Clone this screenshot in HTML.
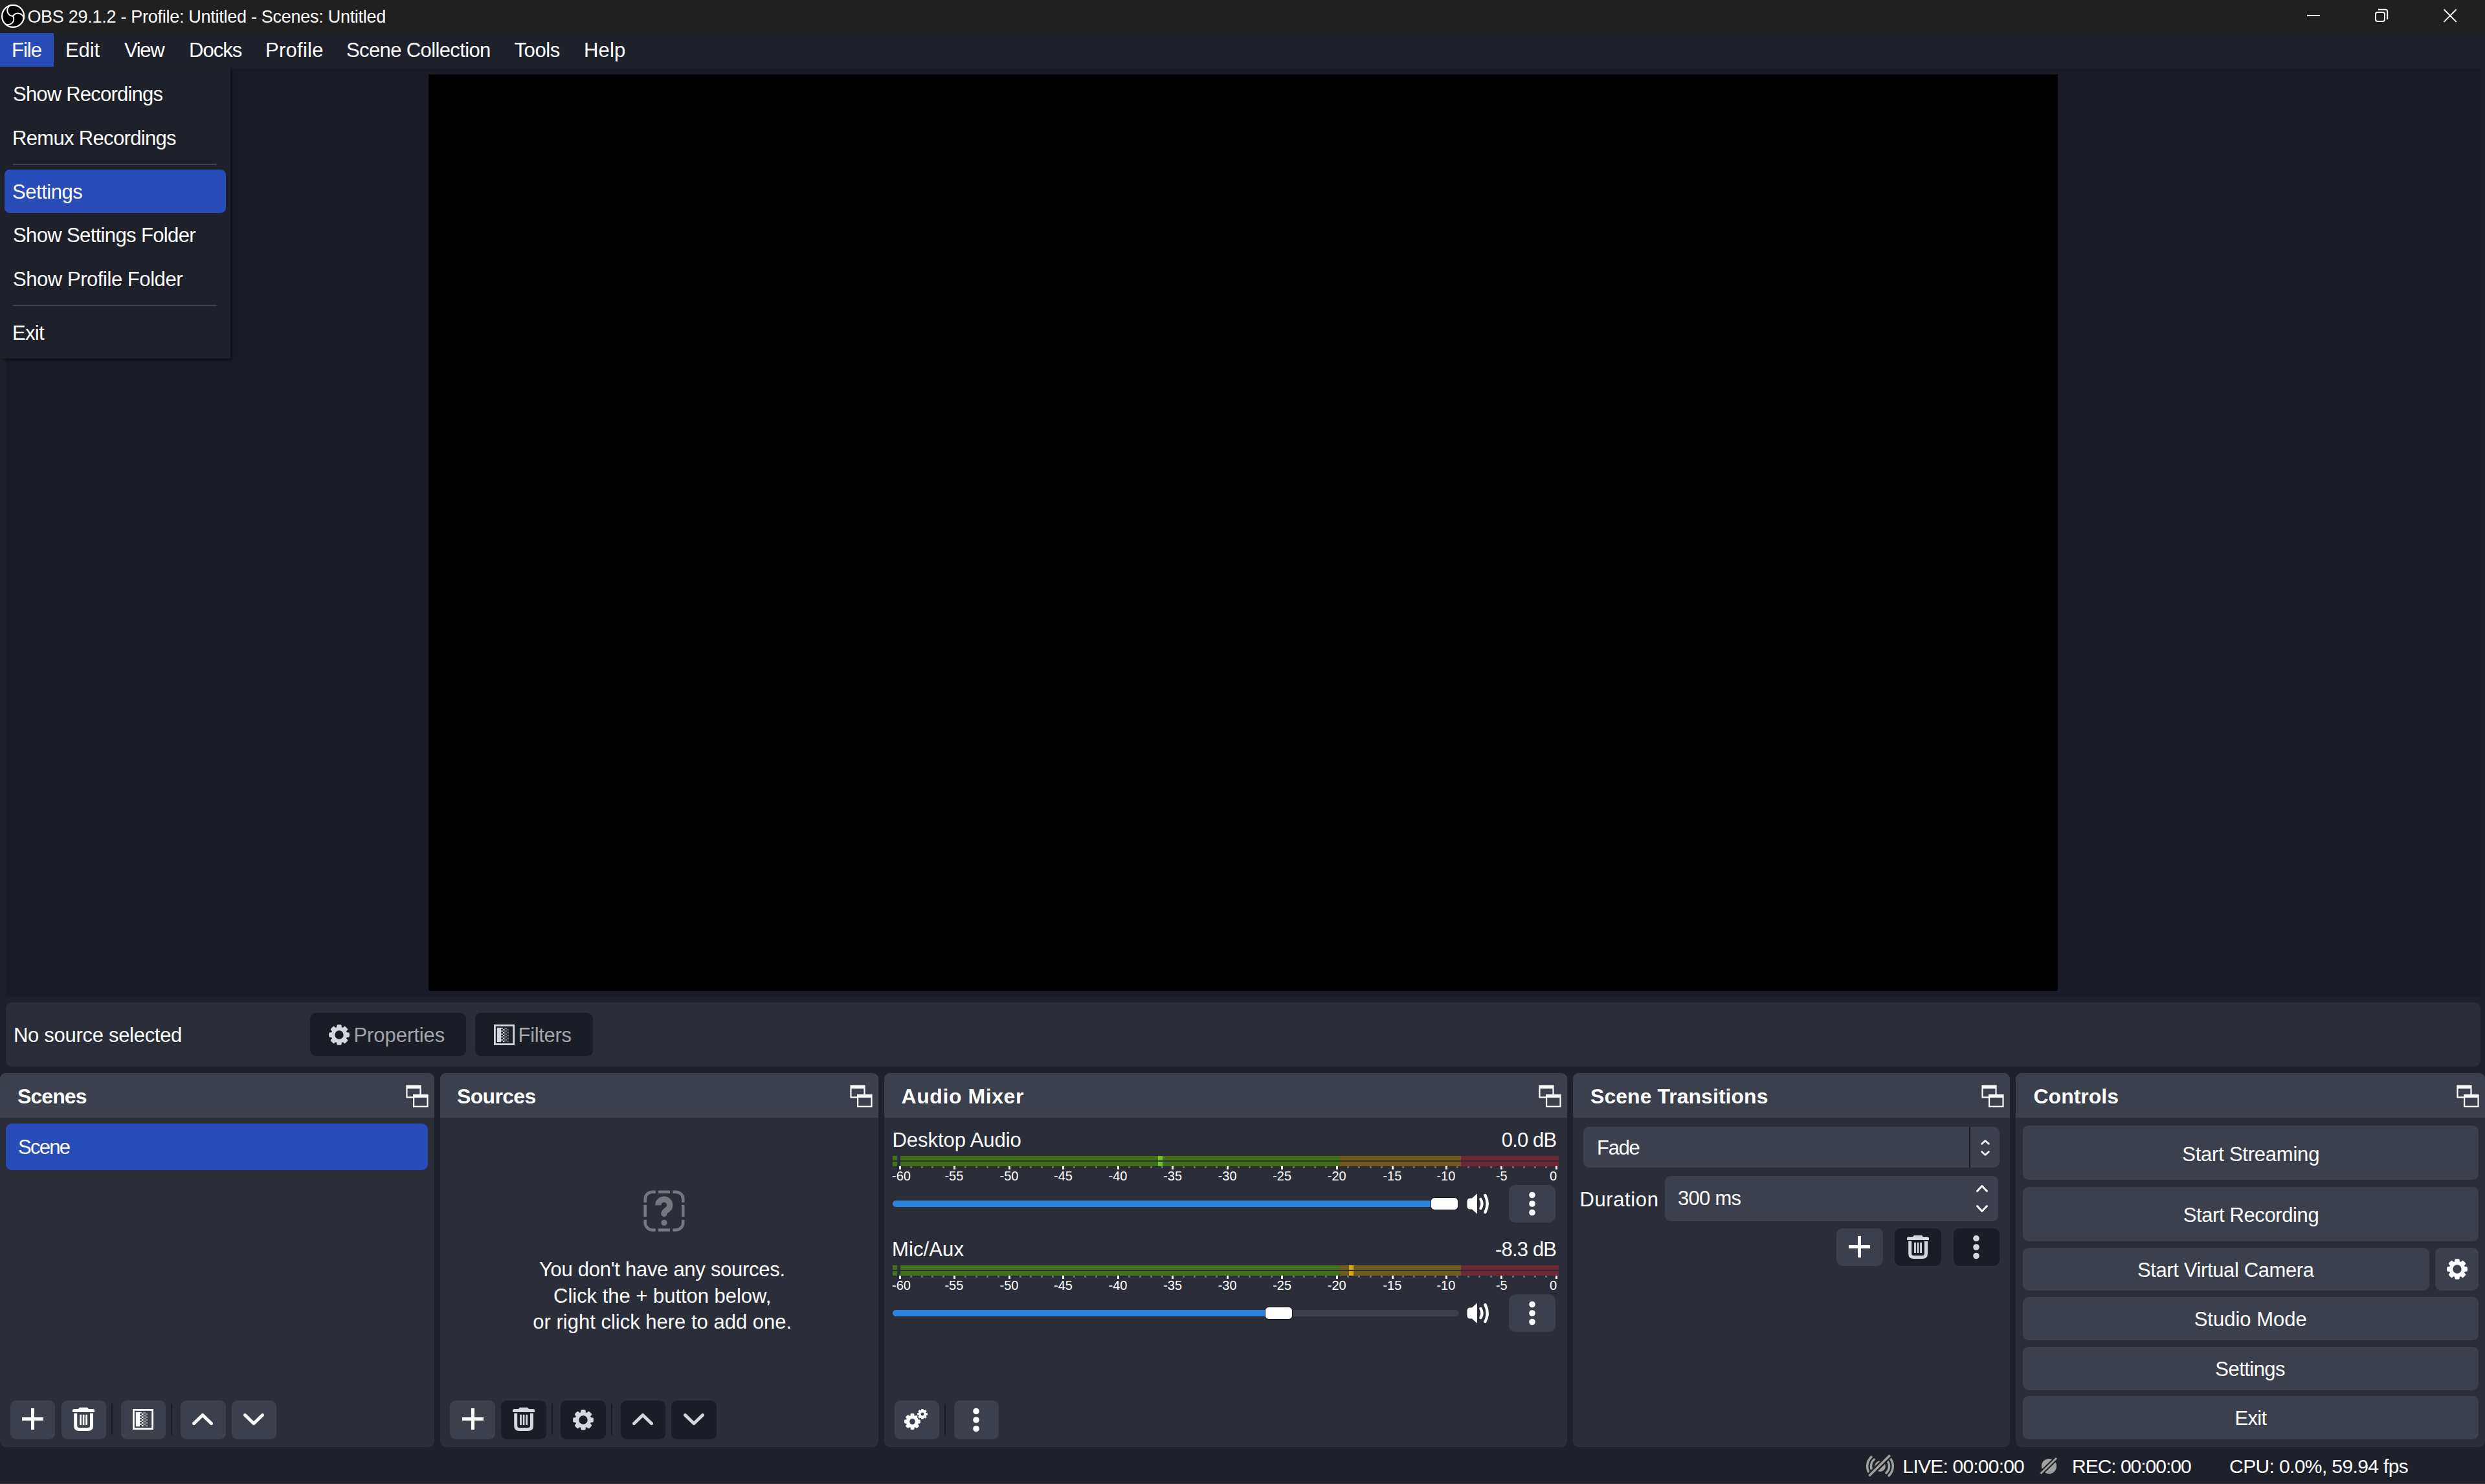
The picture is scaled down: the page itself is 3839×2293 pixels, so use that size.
<!DOCTYPE html>
<html><head><meta charset="utf-8"><style>
html,body{margin:0;padding:0;width:3839px;height:2293px;overflow:hidden;background:#1f212a;}
body>div,body>svg{position:absolute;}
.t{font-family:"Liberation Sans",sans-serif;white-space:pre;}
</style></head><body>
<div style="left:0px;top:0px;width:3839px;height:2293px;background:#1f212a;"></div>
<div style="left:0px;top:0px;width:3839px;height:51px;background:#202020;"></div>
<svg style="left:1px;top:6px;" width="38" height="38" viewBox="0 0 38 38"><circle cx="19.1" cy="18.9" r="17" fill="#000" stroke="#fff" stroke-width="2.2"/><path d="M19.1,18.9 A8.8,8.8 0 0 1 15.38,2.12 M19.1,18.9 A8.8,8.8 0 0 1 35.49,24.07 M19.1,18.9 A8.8,8.8 0 0 1 6.43,30.51" fill="none" stroke="#fff" stroke-width="2.1"/></svg>
<div id="title" class="t" style="top:13px;font-size:27px;line-height:27px;color:#ffffff;letter-spacing:-0.279px;left:42.4px;">OBS 29.1.2 - Profile: Untitled - Scenes: Untitled</div>
<div style="left:3564px;top:23px;width:20px;height:2px;background:#fff;"></div>
<svg style="left:3666px;top:11px;" width="28" height="28" viewBox="0 0 28 28"><rect x="4" y="8" width="14" height="14" rx="3" fill="none" stroke="#fff" stroke-width="2"/><path d="M8,3.8 H18.8 Q22.2,3.8 22.2,7.2 V19" fill="none" stroke="#fff" stroke-width="2"/></svg>
<svg style="left:3772px;top:11px;" width="26" height="26" viewBox="0 0 26 26"><path d="M3.5,3.5 L22.8,22.8 M22.8,3.5 L3.5,22.8" stroke="#fff" stroke-width="1.9"/></svg>
<div style="left:0px;top:51px;width:83px;height:52px;background:#284cb8;"></div>
<div id="m_file" class="t" style="top:62px;font-size:31px;line-height:31px;color:#ffffff;letter-spacing:-1.000px;left:18px;">File</div>
<div id="m_edit" class="t" style="top:62px;font-size:31px;line-height:31px;color:#ffffff;letter-spacing:-0.134px;left:101.0px;">Edit</div>
<div id="m_view" class="t" style="top:62px;font-size:31px;line-height:31px;color:#ffffff;letter-spacing:-1.333px;left:192px;">View</div>
<div id="m_docks" class="t" style="top:62px;font-size:31px;line-height:31px;color:#ffffff;letter-spacing:-1.000px;left:292px;">Docks</div>
<div id="m_profile" class="t" style="top:62px;font-size:31px;line-height:31px;color:#ffffff;letter-spacing:0.266px;left:410.0px;">Profile</div>
<div id="m_sc" class="t" style="top:62px;font-size:31px;line-height:31px;color:#ffffff;letter-spacing:-0.626px;left:535.0px;">Scene Collection</div>
<div id="m_tools" class="t" style="top:62px;font-size:31px;line-height:31px;color:#ffffff;letter-spacing:-0.400px;left:794.5px;">Tools</div>
<div id="m_help" class="t" style="top:62px;font-size:31px;line-height:31px;color:#ffffff;letter-spacing:0.133px;left:902.0px;">Help</div>
<div style="left:9px;top:105px;width:3823px;height:1435px;background:#191b26;"></div>
<div style="left:662px;top:115px;width:2517px;height:1416px;background:#000;"></div>
<div style="left:9px;top:1549px;width:3823px;height:99px;background:#2b2e38;border-radius:9px;"></div>
<div id="nosrc" class="t" style="top:1584px;font-size:31px;line-height:31px;color:#ffffff;letter-spacing:-0.294px;left:21px;">No source selected</div>
<div style="left:479px;top:1565px;width:241px;height:67px;background:#1b1d26;border-radius:9px;"></div>
<svg style="left:507px;top:1582px;overflow:visible" width="34" height="34" viewBox="0 0 34 34"><path fill-rule="evenodd" fill="#d6d6de" stroke="#d6d6de" stroke-width="3.52" stroke-linejoin="round" d="M26.90,12.90 L27.53,14.98 L31.10,15.01 L31.10,18.99 L27.53,19.02 L26.90,21.10 L25.87,23.02 L28.38,25.56 L25.56,28.38 L23.02,25.87 L21.10,26.90 L19.02,27.53 L18.99,31.10 L15.01,31.10 L14.98,27.53 L12.90,26.90 L10.98,25.87 L8.44,28.38 L5.62,25.56 L8.13,23.02 L7.10,21.10 L6.47,19.02 L2.90,18.99 L2.90,15.01 L6.47,14.98 L7.10,12.90 L8.13,10.98 L5.62,8.44 L8.44,5.62 L10.98,8.13 L12.90,7.10 L14.98,6.47 L15.01,2.90 L18.99,2.90 L19.02,6.47 L21.10,7.10 L23.02,8.13 L25.56,5.62 L28.38,8.44 L25.87,10.98Z M25.48,17.00 A8.48,8.48 0 1 0 8.52,17.00 A8.48,8.48 0 1 0 25.48,17.00Z"/></svg>
<div id="props" class="t" style="top:1584px;font-size:31px;line-height:31px;color:#a4a4aa;letter-spacing:-0.066px;left:546.5px;">Properties</div>
<div style="left:734px;top:1565px;width:182px;height:67px;background:#1b1d26;border-radius:9px;"></div>
<svg style="left:763px;top:1583px;" width="32" height="32" viewBox="0 0 32 32"><rect x="1.4" y="1.4" width="29.2" height="29.2" fill="none" stroke="#d6d6de" stroke-width="2.8"/><rect x="4.8" y="4.9" width="6.5" height="22.2" fill="#d6d6de"/><rect x="11.3" y="4.90" width="2.4" height="2.22" fill="#d6d6de"/><rect x="16.3" y="4.90" width="4" height="2.22" fill="#d6d6de" opacity="0.45"/><rect x="11.3" y="7.12" width="2.4" height="2.22" fill="#17181e" opacity="0.7"/><rect x="13.9" y="7.12" width="2.3" height="2.22" fill="#d6d6de"/><rect x="16.3" y="7.12" width="1" height="2.22" fill="#d6d6de" opacity="0.45"/><rect x="18.2" y="7.12" width="2" height="2.22" fill="#d6d6de" opacity="0.15"/><rect x="20.6" y="7.12" width="2.4" height="2.22" fill="#d6d6de" opacity="0.45"/><rect x="11.3" y="9.34" width="2.4" height="2.22" fill="#d6d6de"/><rect x="16.3" y="9.34" width="4" height="2.22" fill="#d6d6de" opacity="0.45"/><rect x="11.3" y="11.56" width="2.4" height="2.22" fill="#17181e" opacity="0.7"/><rect x="13.9" y="11.56" width="2.3" height="2.22" fill="#d6d6de"/><rect x="16.3" y="11.56" width="1" height="2.22" fill="#d6d6de" opacity="0.45"/><rect x="18.2" y="11.56" width="2" height="2.22" fill="#d6d6de" opacity="0.15"/><rect x="20.6" y="11.56" width="2.4" height="2.22" fill="#d6d6de" opacity="0.45"/><rect x="11.3" y="13.78" width="2.4" height="2.22" fill="#d6d6de"/><rect x="16.3" y="13.78" width="4" height="2.22" fill="#d6d6de" opacity="0.45"/><rect x="11.3" y="16.00" width="2.4" height="2.22" fill="#17181e" opacity="0.7"/><rect x="13.9" y="16.00" width="2.3" height="2.22" fill="#d6d6de"/><rect x="16.3" y="16.00" width="1" height="2.22" fill="#d6d6de" opacity="0.45"/><rect x="18.2" y="16.00" width="2" height="2.22" fill="#d6d6de" opacity="0.15"/><rect x="20.6" y="16.00" width="2.4" height="2.22" fill="#d6d6de" opacity="0.45"/><rect x="11.3" y="18.22" width="2.4" height="2.22" fill="#d6d6de"/><rect x="16.3" y="18.22" width="4" height="2.22" fill="#d6d6de" opacity="0.45"/><rect x="11.3" y="20.44" width="2.4" height="2.22" fill="#17181e" opacity="0.7"/><rect x="13.9" y="20.44" width="2.3" height="2.22" fill="#d6d6de"/><rect x="16.3" y="20.44" width="1" height="2.22" fill="#d6d6de" opacity="0.45"/><rect x="18.2" y="20.44" width="2" height="2.22" fill="#d6d6de" opacity="0.15"/><rect x="20.6" y="20.44" width="2.4" height="2.22" fill="#d6d6de" opacity="0.45"/><rect x="11.3" y="22.66" width="2.4" height="2.22" fill="#d6d6de"/><rect x="16.3" y="22.66" width="4" height="2.22" fill="#d6d6de" opacity="0.45"/><rect x="11.3" y="24.88" width="2.4" height="2.22" fill="#17181e" opacity="0.7"/><rect x="13.9" y="24.88" width="2.3" height="2.22" fill="#d6d6de"/><rect x="16.3" y="24.88" width="1" height="2.22" fill="#d6d6de" opacity="0.45"/><rect x="18.2" y="24.88" width="2" height="2.22" fill="#d6d6de" opacity="0.15"/><rect x="20.6" y="24.88" width="2.4" height="2.22" fill="#d6d6de" opacity="0.45"/></svg>
<div id="filters" class="t" style="top:1584px;font-size:31px;line-height:31px;color:#a4a4aa;letter-spacing:-0.300px;left:800.5px;">Filters</div>
<div style="left:0px;top:1658px;width:671px;height:578px;background:#2b2e38;border-radius:9px;"></div>
<div style="left:0px;top:1658px;width:671px;height:69px;background:#3c404d;border-radius:9px 9px 0 0;"></div>
<div id="dk0" class="t" style="top:1678px;font-size:32px;line-height:32px;color:#ffffff;font-weight:bold;letter-spacing:-0.920px;left:27.0px;">Scenes</div>
<svg style="left:627px;top:1676px;" width="36" height="36" viewBox="0 0 36 36"><rect x="1.5" y="2" width="21" height="17.5" fill="none" stroke="#fff" stroke-width="2.2"/><rect x="1" y="1" width="22" height="5" fill="#fff"/><rect x="11.5" y="16" width="22" height="18" fill="#3c404d"/><rect x="12.1" y="16.1" width="21.4" height="17.7" fill="none" stroke="#fff" stroke-width="2.2"/><rect x="11" y="15" width="23" height="5" fill="#fff"/></svg>
<div style="left:680px;top:1658px;width:677px;height:578px;background:#2b2e38;border-radius:9px;"></div>
<div style="left:680px;top:1658px;width:677px;height:69px;background:#3c404d;border-radius:9px 9px 0 0;"></div>
<div id="dk1" class="t" style="top:1678px;font-size:32px;line-height:32px;color:#ffffff;font-weight:bold;letter-spacing:-0.667px;left:706px;">Sources</div>
<svg style="left:1313px;top:1676px;" width="36" height="36" viewBox="0 0 36 36"><rect x="1.5" y="2" width="21" height="17.5" fill="none" stroke="#fff" stroke-width="2.2"/><rect x="1" y="1" width="22" height="5" fill="#fff"/><rect x="11.5" y="16" width="22" height="18" fill="#3c404d"/><rect x="12.1" y="16.1" width="21.4" height="17.7" fill="none" stroke="#fff" stroke-width="2.2"/><rect x="11" y="15" width="23" height="5" fill="#fff"/></svg>
<div style="left:1366px;top:1658px;width:1055px;height:578px;background:#2b2e38;border-radius:9px;"></div>
<div style="left:1366px;top:1658px;width:1055px;height:69px;background:#3c404d;border-radius:9px 9px 0 0;"></div>
<div id="dk2" class="t" style="top:1678px;font-size:32px;line-height:32px;color:#ffffff;font-weight:bold;letter-spacing:0.580px;left:1392.5px;">Audio Mixer</div>
<svg style="left:2377px;top:1676px;" width="36" height="36" viewBox="0 0 36 36"><rect x="1.5" y="2" width="21" height="17.5" fill="none" stroke="#fff" stroke-width="2.2"/><rect x="1" y="1" width="22" height="5" fill="#fff"/><rect x="11.5" y="16" width="22" height="18" fill="#3c404d"/><rect x="12.1" y="16.1" width="21.4" height="17.7" fill="none" stroke="#fff" stroke-width="2.2"/><rect x="11" y="15" width="23" height="5" fill="#fff"/></svg>
<div style="left:2430px;top:1658px;width:675px;height:578px;background:#2b2e38;border-radius:9px;"></div>
<div style="left:2430px;top:1658px;width:675px;height:69px;background:#3c404d;border-radius:9px 9px 0 0;"></div>
<div id="dk3" class="t" style="top:1678px;font-size:32px;line-height:32px;color:#ffffff;font-weight:bold;letter-spacing:0.037px;left:2457.0px;">Scene Transitions</div>
<svg style="left:3061px;top:1676px;" width="36" height="36" viewBox="0 0 36 36"><rect x="1.5" y="2" width="21" height="17.5" fill="none" stroke="#fff" stroke-width="2.2"/><rect x="1" y="1" width="22" height="5" fill="#fff"/><rect x="11.5" y="16" width="22" height="18" fill="#3c404d"/><rect x="12.1" y="16.1" width="21.4" height="17.7" fill="none" stroke="#fff" stroke-width="2.2"/><rect x="11" y="15" width="23" height="5" fill="#fff"/></svg>
<div style="left:3114px;top:1658px;width:725px;height:578px;background:#2b2e38;border-radius:9px;"></div>
<div style="left:3114px;top:1658px;width:725px;height:69px;background:#3c404d;border-radius:9px 9px 0 0;"></div>
<div id="dk4" class="t" style="top:1678px;font-size:32px;line-height:32px;color:#ffffff;font-weight:bold;left:3141.5px;">Controls</div>
<svg style="left:3795px;top:1676px;" width="36" height="36" viewBox="0 0 36 36"><rect x="1.5" y="2" width="21" height="17.5" fill="none" stroke="#fff" stroke-width="2.2"/><rect x="1" y="1" width="22" height="5" fill="#fff"/><rect x="11.5" y="16" width="22" height="18" fill="#3c404d"/><rect x="12.1" y="16.1" width="21.4" height="17.7" fill="none" stroke="#fff" stroke-width="2.2"/><rect x="11" y="15" width="23" height="5" fill="#fff"/></svg>
<div style="left:9px;top:1736px;width:652px;height:72px;background:#284cb8;border-radius:9px;"></div>
<div id="scene" class="t" style="top:1757px;font-size:31px;line-height:31px;color:#ffffff;letter-spacing:-1.750px;left:28px;">Scene</div>
<div style="left:16px;top:2164px;width:69px;height:60px;background:#3c404d;border-radius:9px;"></div>
<svg style="left:34px;top:2176px;" width="33" height="33" viewBox="0 0 33 33"><path d="M16.5,0 V33 M0,16.5 H33" stroke="#fff" stroke-width="5"/></svg>
<div style="left:95px;top:2164px;width:69px;height:60px;background:#3c404d;border-radius:9px;"></div>
<svg style="left:111px;top:2174px;" width="36" height="38" viewBox="0 0 36 38"><path d="M1,5.5 Q1,3 3.5,3 H10 L12,0.7 H24 L26,3 H32.5 Q35,3 35,5.5 V8 H1 Z" fill="#fff"/><path d="M5.7,9.8 V29 Q5.7,34.5 11.2,34.5 H24.8 Q30.5,34.5 30.5,29 V9.8" fill="none" stroke="#fff" stroke-width="5"/><rect x="12.1" y="11.8" width="2.8" height="16.2" fill="#fff"/><rect x="16.8" y="11.8" width="2.6" height="16.2" fill="#fff"/><rect x="21.2" y="11.8" width="2.8" height="16.2" fill="#fff"/></svg>
<div style="left:172px;top:2169px;width:2px;height:48px;background:#1b1d24;"></div>
<div style="left:187px;top:2164px;width:69px;height:60px;background:#3c404d;border-radius:9px;"></div>
<svg style="left:205px;top:2177px;" width="32" height="32" viewBox="0 0 32 32"><rect x="1.4" y="1.4" width="29.2" height="29.2" fill="none" stroke="#fff" stroke-width="2.8"/><rect x="4.8" y="4.9" width="6.5" height="22.2" fill="#fff"/><rect x="11.3" y="4.90" width="2.4" height="2.22" fill="#fff"/><rect x="16.3" y="4.90" width="4" height="2.22" fill="#fff" opacity="0.45"/><rect x="11.3" y="7.12" width="2.4" height="2.22" fill="#17181e" opacity="0.7"/><rect x="13.9" y="7.12" width="2.3" height="2.22" fill="#fff"/><rect x="16.3" y="7.12" width="1" height="2.22" fill="#fff" opacity="0.45"/><rect x="18.2" y="7.12" width="2" height="2.22" fill="#fff" opacity="0.15"/><rect x="20.6" y="7.12" width="2.4" height="2.22" fill="#fff" opacity="0.45"/><rect x="11.3" y="9.34" width="2.4" height="2.22" fill="#fff"/><rect x="16.3" y="9.34" width="4" height="2.22" fill="#fff" opacity="0.45"/><rect x="11.3" y="11.56" width="2.4" height="2.22" fill="#17181e" opacity="0.7"/><rect x="13.9" y="11.56" width="2.3" height="2.22" fill="#fff"/><rect x="16.3" y="11.56" width="1" height="2.22" fill="#fff" opacity="0.45"/><rect x="18.2" y="11.56" width="2" height="2.22" fill="#fff" opacity="0.15"/><rect x="20.6" y="11.56" width="2.4" height="2.22" fill="#fff" opacity="0.45"/><rect x="11.3" y="13.78" width="2.4" height="2.22" fill="#fff"/><rect x="16.3" y="13.78" width="4" height="2.22" fill="#fff" opacity="0.45"/><rect x="11.3" y="16.00" width="2.4" height="2.22" fill="#17181e" opacity="0.7"/><rect x="13.9" y="16.00" width="2.3" height="2.22" fill="#fff"/><rect x="16.3" y="16.00" width="1" height="2.22" fill="#fff" opacity="0.45"/><rect x="18.2" y="16.00" width="2" height="2.22" fill="#fff" opacity="0.15"/><rect x="20.6" y="16.00" width="2.4" height="2.22" fill="#fff" opacity="0.45"/><rect x="11.3" y="18.22" width="2.4" height="2.22" fill="#fff"/><rect x="16.3" y="18.22" width="4" height="2.22" fill="#fff" opacity="0.45"/><rect x="11.3" y="20.44" width="2.4" height="2.22" fill="#17181e" opacity="0.7"/><rect x="13.9" y="20.44" width="2.3" height="2.22" fill="#fff"/><rect x="16.3" y="20.44" width="1" height="2.22" fill="#fff" opacity="0.45"/><rect x="18.2" y="20.44" width="2" height="2.22" fill="#fff" opacity="0.15"/><rect x="20.6" y="20.44" width="2.4" height="2.22" fill="#fff" opacity="0.45"/><rect x="11.3" y="22.66" width="2.4" height="2.22" fill="#fff"/><rect x="16.3" y="22.66" width="4" height="2.22" fill="#fff" opacity="0.45"/><rect x="11.3" y="24.88" width="2.4" height="2.22" fill="#17181e" opacity="0.7"/><rect x="13.9" y="24.88" width="2.3" height="2.22" fill="#fff"/><rect x="16.3" y="24.88" width="1" height="2.22" fill="#fff" opacity="0.45"/><rect x="18.2" y="24.88" width="2" height="2.22" fill="#fff" opacity="0.15"/><rect x="20.6" y="24.88" width="2.4" height="2.22" fill="#fff" opacity="0.45"/></svg>
<div style="left:264px;top:2169px;width:2px;height:48px;background:#1b1d24;"></div>
<div style="left:279px;top:2164px;width:70px;height:60px;background:#3c404d;border-radius:9px;"></div>
<svg style="left:297px;top:2184px;" width="32" height="18" viewBox="0 0 32 18"><path d="M2.5,15.5 L16.0,2.5 L29.5,15.5" fill="none" stroke="#fff" stroke-width="5" stroke-linecap="round" stroke-linejoin="round"/></svg>
<div style="left:358px;top:2164px;width:69px;height:60px;background:#3c404d;border-radius:9px;"></div>
<svg style="left:376px;top:2184px;" width="32" height="18" viewBox="0 0 32 18"><path d="M2.5,2.5 L16.0,15.5 L29.5,2.5" fill="none" stroke="#fff" stroke-width="5" stroke-linecap="round" stroke-linejoin="round"/></svg>
<svg style="left:994px;top:1839px;" width="64" height="64" viewBox="0 0 64 64"><path d="M2.7,19 V13.9 A11.2,11.2 0 0 1 13.9,2.7 H18.8 M22.8,2.7 H41 M45.3,2.7 H50.1 A11.2,11.2 0 0 1 61.3,13.9 V19 M61.3,22.8 V41.1 M61.3,45.7 V50.3 A11.2,11.2 0 0 1 50.1,61.5 H45.3 M41,61.5 H22.8 M18.8,61.5 H13.9 A11.2,11.2 0 0 1 2.7,50.3 V45.7 M2.7,41.1 V22.8" fill="none" stroke="#76777e" stroke-width="4.6"/><path d="M22.8,23.2 A9,9 0 0 1 40.8,23.2 Q40.8,27.8 36.3,30.6 Q32,33.4 32,36.5" fill="none" stroke="#76777e" stroke-width="9.2"/><circle cx="32" cy="36.5" r="4.6" fill="#76777e"/><circle cx="32" cy="50.3" r="4.6" fill="#76777e"/></svg>
<div id="src1" class="t" style="top:1946px;font-size:31px;line-height:31px;color:#ffffff;letter-spacing:-0.277px;left:22.900000000000045px;width:2000px;text-align:center;">You don't have any sources.</div>
<div id="src2" class="t" style="top:1987.3px;font-size:31px;line-height:31px;color:#ffffff;letter-spacing:-0.025px;left:23.2px;width:2000px;text-align:center;">Click the + button below,</div>
<div id="src3" class="t" style="top:2027px;font-size:31px;line-height:31px;color:#ffffff;left:23.200000000000045px;width:2000px;text-align:center;">or right click here to add one.</div>
<div style="left:695px;top:2164px;width:70px;height:60px;background:#3c404d;border-radius:9px;"></div>
<svg style="left:714px;top:2176px;" width="33" height="33" viewBox="0 0 33 33"><path d="M16.5,0 V33 M0,16.5 H33" stroke="#fff" stroke-width="5"/></svg>
<div style="left:774px;top:2164px;width:70px;height:60px;background:#1b1d26;border-radius:9px;"></div>
<svg style="left:791px;top:2174px;" width="36" height="38" viewBox="0 0 36 38"><path d="M1,5.5 Q1,3 3.5,3 H10 L12,0.7 H24 L26,3 H32.5 Q35,3 35,5.5 V8 H1 Z" fill="#d6d6de"/><path d="M5.7,9.8 V29 Q5.7,34.5 11.2,34.5 H24.8 Q30.5,34.5 30.5,29 V9.8" fill="none" stroke="#d6d6de" stroke-width="5"/><rect x="12.1" y="11.8" width="2.8" height="16.2" fill="#d6d6de"/><rect x="16.8" y="11.8" width="2.6" height="16.2" fill="#d6d6de"/><rect x="21.2" y="11.8" width="2.8" height="16.2" fill="#d6d6de"/></svg>
<div style="left:852px;top:2169px;width:2px;height:48px;background:#1b1d24;"></div>
<div style="left:866px;top:2164px;width:70px;height:60px;background:#1b1d26;border-radius:9px;"></div>
<svg style="left:884px;top:2177px;overflow:visible" width="34" height="34" viewBox="0 0 34 34"><path fill-rule="evenodd" fill="#d6d6de" stroke="#d6d6de" stroke-width="3.52" stroke-linejoin="round" d="M26.90,12.90 L27.53,14.98 L31.10,15.01 L31.10,18.99 L27.53,19.02 L26.90,21.10 L25.87,23.02 L28.38,25.56 L25.56,28.38 L23.02,25.87 L21.10,26.90 L19.02,27.53 L18.99,31.10 L15.01,31.10 L14.98,27.53 L12.90,26.90 L10.98,25.87 L8.44,28.38 L5.62,25.56 L8.13,23.02 L7.10,21.10 L6.47,19.02 L2.90,18.99 L2.90,15.01 L6.47,14.98 L7.10,12.90 L8.13,10.98 L5.62,8.44 L8.44,5.62 L10.98,8.13 L12.90,7.10 L14.98,6.47 L15.01,2.90 L18.99,2.90 L19.02,6.47 L21.10,7.10 L23.02,8.13 L25.56,5.62 L28.38,8.44 L25.87,10.98Z M25.48,17.00 A8.48,8.48 0 1 0 8.52,17.00 A8.48,8.48 0 1 0 25.48,17.00Z"/></svg>
<div style="left:944px;top:2169px;width:2px;height:48px;background:#1b1d24;"></div>
<div style="left:959px;top:2164px;width:69px;height:60px;background:#1b1d26;border-radius:9px;"></div>
<svg style="left:977px;top:2184px;" width="32" height="18" viewBox="0 0 32 18"><path d="M2.5,15.5 L16.0,2.5 L29.5,15.5" fill="none" stroke="#d6d6de" stroke-width="5" stroke-linecap="round" stroke-linejoin="round"/></svg>
<div style="left:1037px;top:2164px;width:70px;height:60px;background:#1b1d26;border-radius:9px;"></div>
<svg style="left:1056px;top:2184px;" width="32" height="18" viewBox="0 0 32 18"><path d="M2.5,2.5 L16.0,15.5 L29.5,2.5" fill="none" stroke="#d6d6de" stroke-width="5" stroke-linecap="round" stroke-linejoin="round"/></svg>
<div id="ch_0" class="t" style="top:1746px;font-size:31px;line-height:31px;color:#ffffff;letter-spacing:-0.049px;left:1378.5px;">Desktop Audio</div>
<div id="chv_0" class="t" style="top:1745.6px;font-size:31px;line-height:31px;color:#ffffff;letter-spacing:-0.880px;left:404.2px;width:2000px;text-align:right;">0.0 dB</div>
<div style="left:1379px;top:1786px;width:7px;height:7px;background:#427018;"></div>
<div style="left:1391px;top:1786px;width:679px;height:7px;background:#427018;"></div>
<div style="left:2070px;top:1786px;width:187px;height:7px;background:#705b1c;"></div>
<div style="left:2257px;top:1786px;width:151px;height:7px;background:#702735;"></div>
<div style="left:1789px;top:1786px;width:7px;height:7px;background:#73bd31;"></div>
<div style="left:1379px;top:1795px;width:7px;height:7px;background:#427018;"></div>
<div style="left:1391px;top:1795px;width:679px;height:7px;background:#427018;"></div>
<div style="left:2070px;top:1795px;width:187px;height:7px;background:#705b1c;"></div>
<div style="left:2257px;top:1795px;width:151px;height:7px;background:#702735;"></div>
<div style="left:1789px;top:1795px;width:7px;height:7px;background:#73bd31;"></div>
<div style="left:1389px;top:1802px;width:3px;height:5px;background:#fff;"></div>
<div style="left:1406px;top:1802px;width:3px;height:3px;background:#6b6b6b;"></div>
<div style="left:1423px;top:1802px;width:3px;height:3px;background:#6b6b6b;"></div>
<div style="left:1439px;top:1802px;width:3px;height:3px;background:#6b6b6b;"></div>
<div style="left:1456px;top:1802px;width:3px;height:3px;background:#6b6b6b;"></div>
<div style="left:1473px;top:1802px;width:3px;height:5px;background:#fff;"></div>
<div style="left:1490px;top:1802px;width:3px;height:3px;background:#6b6b6b;"></div>
<div style="left:1507px;top:1802px;width:3px;height:3px;background:#6b6b6b;"></div>
<div style="left:1524px;top:1802px;width:3px;height:3px;background:#6b6b6b;"></div>
<div style="left:1541px;top:1802px;width:3px;height:3px;background:#6b6b6b;"></div>
<div style="left:1558px;top:1802px;width:3px;height:5px;background:#fff;"></div>
<div style="left:1575px;top:1802px;width:3px;height:3px;background:#6b6b6b;"></div>
<div style="left:1591px;top:1802px;width:3px;height:3px;background:#6b6b6b;"></div>
<div style="left:1608px;top:1802px;width:3px;height:3px;background:#6b6b6b;"></div>
<div style="left:1625px;top:1802px;width:3px;height:3px;background:#6b6b6b;"></div>
<div style="left:1641px;top:1802px;width:3px;height:5px;background:#fff;"></div>
<div style="left:1658px;top:1802px;width:3px;height:3px;background:#6b6b6b;"></div>
<div style="left:1675px;top:1802px;width:3px;height:3px;background:#6b6b6b;"></div>
<div style="left:1692px;top:1802px;width:3px;height:3px;background:#6b6b6b;"></div>
<div style="left:1709px;top:1802px;width:3px;height:3px;background:#6b6b6b;"></div>
<div style="left:1726px;top:1802px;width:3px;height:5px;background:#fff;"></div>
<div style="left:1743px;top:1802px;width:3px;height:3px;background:#6b6b6b;"></div>
<div style="left:1760px;top:1802px;width:3px;height:3px;background:#6b6b6b;"></div>
<div style="left:1777px;top:1802px;width:3px;height:3px;background:#6b6b6b;"></div>
<div style="left:1794px;top:1802px;width:3px;height:3px;background:#6b6b6b;"></div>
<div style="left:1810px;top:1802px;width:3px;height:5px;background:#fff;"></div>
<div style="left:1827px;top:1802px;width:3px;height:3px;background:#6b6b6b;"></div>
<div style="left:1844px;top:1802px;width:3px;height:3px;background:#6b6b6b;"></div>
<div style="left:1861px;top:1802px;width:3px;height:3px;background:#6b6b6b;"></div>
<div style="left:1878px;top:1802px;width:3px;height:3px;background:#6b6b6b;"></div>
<div style="left:1895px;top:1802px;width:3px;height:5px;background:#fff;"></div>
<div style="left:1912px;top:1802px;width:3px;height:3px;background:#6b6b6b;"></div>
<div style="left:1929px;top:1802px;width:3px;height:3px;background:#6b6b6b;"></div>
<div style="left:1946px;top:1802px;width:3px;height:3px;background:#6b6b6b;"></div>
<div style="left:1963px;top:1802px;width:3px;height:3px;background:#6b6b6b;"></div>
<div style="left:1979px;top:1802px;width:3px;height:5px;background:#fff;"></div>
<div style="left:1997px;top:1802px;width:3px;height:3px;background:#6b6b6b;"></div>
<div style="left:2013px;top:1802px;width:3px;height:3px;background:#6b6b6b;"></div>
<div style="left:2030px;top:1802px;width:3px;height:3px;background:#6b6b6b;"></div>
<div style="left:2047px;top:1802px;width:3px;height:3px;background:#6b6b6b;"></div>
<div style="left:2064px;top:1802px;width:3px;height:5px;background:#fff;"></div>
<div style="left:2081px;top:1802px;width:3px;height:3px;background:#6b6b6b;"></div>
<div style="left:2098px;top:1802px;width:3px;height:3px;background:#6b6b6b;"></div>
<div style="left:2116px;top:1802px;width:3px;height:3px;background:#6b6b6b;"></div>
<div style="left:2133px;top:1802px;width:3px;height:3px;background:#6b6b6b;"></div>
<div style="left:2150px;top:1802px;width:3px;height:5px;background:#fff;"></div>
<div style="left:2166px;top:1802px;width:3px;height:3px;background:#6b6b6b;"></div>
<div style="left:2183px;top:1802px;width:3px;height:3px;background:#6b6b6b;"></div>
<div style="left:2200px;top:1802px;width:3px;height:3px;background:#6b6b6b;"></div>
<div style="left:2216px;top:1802px;width:3px;height:3px;background:#6b6b6b;"></div>
<div style="left:2233px;top:1802px;width:3px;height:5px;background:#fff;"></div>
<div style="left:2250px;top:1802px;width:3px;height:3px;background:#6b6b6b;"></div>
<div style="left:2267px;top:1802px;width:3px;height:3px;background:#6b6b6b;"></div>
<div style="left:2284px;top:1802px;width:3px;height:3px;background:#6b6b6b;"></div>
<div style="left:2302px;top:1802px;width:3px;height:3px;background:#6b6b6b;"></div>
<div style="left:2318px;top:1802px;width:3px;height:5px;background:#fff;"></div>
<div style="left:2336px;top:1802px;width:3px;height:3px;background:#6b6b6b;"></div>
<div style="left:2353px;top:1802px;width:3px;height:3px;background:#6b6b6b;"></div>
<div style="left:2370px;top:1802px;width:3px;height:3px;background:#6b6b6b;"></div>
<div style="left:2387px;top:1802px;width:3px;height:3px;background:#6b6b6b;"></div>
<div style="left:2403px;top:1802px;width:3px;height:5px;background:#fff;"></div>
<div id="tl_0_-60" class="t" style="top:1807px;font-size:20px;line-height:20px;color:#ffffff;left:1378px;">-60</div>
<div id="tl_0_-55" class="t" style="top:1807px;font-size:20px;line-height:20px;color:#ffffff;left:473.9000000000001px;width:2000px;text-align:center;">-55</div>
<div id="tl_0_-50" class="t" style="top:1807px;font-size:20px;line-height:20px;color:#ffffff;left:559px;width:2000px;text-align:center;">-50</div>
<div id="tl_0_-45" class="t" style="top:1807px;font-size:20px;line-height:20px;color:#ffffff;left:642.5px;width:2000px;text-align:center;">-45</div>
<div id="tl_0_-40" class="t" style="top:1807px;font-size:20px;line-height:20px;color:#ffffff;left:727.04px;width:2000px;text-align:center;">-40</div>
<div id="tl_0_-35" class="t" style="top:1807px;font-size:20px;line-height:20px;color:#ffffff;left:811.5799999999999px;width:2000px;text-align:center;">-35</div>
<div id="tl_0_-30" class="t" style="top:1807px;font-size:20px;line-height:20px;color:#ffffff;left:896.1199999999999px;width:2000px;text-align:center;">-30</div>
<div id="tl_0_-25" class="t" style="top:1807px;font-size:20px;line-height:20px;color:#ffffff;left:980.6599999999999px;width:2000px;text-align:center;">-25</div>
<div id="tl_0_-20" class="t" style="top:1807px;font-size:20px;line-height:20px;color:#ffffff;left:1065.1999999999998px;width:2000px;text-align:center;">-20</div>
<div id="tl_0_-15" class="t" style="top:1807px;font-size:20px;line-height:20px;color:#ffffff;left:1150.9px;width:2000px;text-align:center;">-15</div>
<div id="tl_0_-10" class="t" style="top:1807px;font-size:20px;line-height:20px;color:#ffffff;left:1233.9px;width:2000px;text-align:center;">-10</div>
<div id="tl_0_-5" class="t" style="top:1807px;font-size:20px;line-height:20px;color:#ffffff;left:1319.8000000000002px;width:2000px;text-align:center;">-5</div>
<div id="tl_0_0" class="t" style="top:1807px;font-size:20px;line-height:20px;color:#ffffff;left:405px;width:2000px;text-align:right;">0</div>
<div style="left:1379px;top:1855px;width:875px;height:10px;background:#3c404d;border-radius:5px;"></div>
<div style="left:1379px;top:1855px;width:834px;height:10px;background:#2a82da;border-radius:5px 0 0 5px;"></div>
<div style="left:2211px;top:1851px;width:41px;height:18px;background:#fff;border-radius:5px;box-shadow:0 0 0 1px #17181d;"></div>
<svg style="left:2265px;top:1843px;" width="38" height="34" viewBox="0 0 38 34"><path d="M1.5,13.5 Q1.5,8.5 6.5,8.5 H9 L17,1.2 V32.8 L9,25.5 H6.5 Q1.5,25.5 1.5,20.5 Z" fill="#fff"/><path d="M22.5,10 Q26.5,17 22.5,24" fill="none" stroke="#fff" stroke-width="4.4" stroke-linecap="round"/><path d="M29.5,4 Q36,17 29.5,30" fill="none" stroke="#fff" stroke-width="4.4" stroke-linecap="round"/></svg>
<div style="left:2331px;top:1831px;width:72px;height:58px;background:#3c404d;border-radius:10px;"></div>
<svg style="left:2359px;top:1836px;" width="16" height="48" viewBox="0 0 16 48"><circle cx="8" cy="10.5" r="4.8" fill="#fff"/><circle cx="8" cy="24.0" r="4.8" fill="#fff"/><circle cx="8" cy="37.5" r="4.8" fill="#fff"/></svg>
<div id="ch_169" class="t" style="top:1915px;font-size:31px;line-height:31px;color:#ffffff;letter-spacing:0.101px;left:1378.1000000000001px;">Mic/Aux</div>
<div id="chv_169" class="t" style="top:1914.6px;font-size:31px;line-height:31px;color:#ffffff;letter-spacing:-0.833px;left:404.2px;width:2000px;text-align:right;">-8.3 dB</div>
<div style="left:1379px;top:1955px;width:7px;height:7px;background:#427018;"></div>
<div style="left:1391px;top:1955px;width:679px;height:7px;background:#427018;"></div>
<div style="left:2070px;top:1955px;width:187px;height:7px;background:#705b1c;"></div>
<div style="left:2257px;top:1955px;width:151px;height:7px;background:#702735;"></div>
<div style="left:2084px;top:1955px;width:7px;height:7px;background:#d6a810;"></div>
<div style="left:1379px;top:1964px;width:7px;height:7px;background:#427018;"></div>
<div style="left:1391px;top:1964px;width:679px;height:7px;background:#427018;"></div>
<div style="left:2070px;top:1964px;width:187px;height:7px;background:#705b1c;"></div>
<div style="left:2257px;top:1964px;width:151px;height:7px;background:#702735;"></div>
<div style="left:2084px;top:1964px;width:7px;height:7px;background:#d6a810;"></div>
<div style="left:1389px;top:1971px;width:3px;height:5px;background:#fff;"></div>
<div style="left:1406px;top:1971px;width:3px;height:3px;background:#6b6b6b;"></div>
<div style="left:1423px;top:1971px;width:3px;height:3px;background:#6b6b6b;"></div>
<div style="left:1439px;top:1971px;width:3px;height:3px;background:#6b6b6b;"></div>
<div style="left:1456px;top:1971px;width:3px;height:3px;background:#6b6b6b;"></div>
<div style="left:1473px;top:1971px;width:3px;height:5px;background:#fff;"></div>
<div style="left:1490px;top:1971px;width:3px;height:3px;background:#6b6b6b;"></div>
<div style="left:1507px;top:1971px;width:3px;height:3px;background:#6b6b6b;"></div>
<div style="left:1524px;top:1971px;width:3px;height:3px;background:#6b6b6b;"></div>
<div style="left:1541px;top:1971px;width:3px;height:3px;background:#6b6b6b;"></div>
<div style="left:1558px;top:1971px;width:3px;height:5px;background:#fff;"></div>
<div style="left:1575px;top:1971px;width:3px;height:3px;background:#6b6b6b;"></div>
<div style="left:1591px;top:1971px;width:3px;height:3px;background:#6b6b6b;"></div>
<div style="left:1608px;top:1971px;width:3px;height:3px;background:#6b6b6b;"></div>
<div style="left:1625px;top:1971px;width:3px;height:3px;background:#6b6b6b;"></div>
<div style="left:1641px;top:1971px;width:3px;height:5px;background:#fff;"></div>
<div style="left:1658px;top:1971px;width:3px;height:3px;background:#6b6b6b;"></div>
<div style="left:1675px;top:1971px;width:3px;height:3px;background:#6b6b6b;"></div>
<div style="left:1692px;top:1971px;width:3px;height:3px;background:#6b6b6b;"></div>
<div style="left:1709px;top:1971px;width:3px;height:3px;background:#6b6b6b;"></div>
<div style="left:1726px;top:1971px;width:3px;height:5px;background:#fff;"></div>
<div style="left:1743px;top:1971px;width:3px;height:3px;background:#6b6b6b;"></div>
<div style="left:1760px;top:1971px;width:3px;height:3px;background:#6b6b6b;"></div>
<div style="left:1777px;top:1971px;width:3px;height:3px;background:#6b6b6b;"></div>
<div style="left:1794px;top:1971px;width:3px;height:3px;background:#6b6b6b;"></div>
<div style="left:1810px;top:1971px;width:3px;height:5px;background:#fff;"></div>
<div style="left:1827px;top:1971px;width:3px;height:3px;background:#6b6b6b;"></div>
<div style="left:1844px;top:1971px;width:3px;height:3px;background:#6b6b6b;"></div>
<div style="left:1861px;top:1971px;width:3px;height:3px;background:#6b6b6b;"></div>
<div style="left:1878px;top:1971px;width:3px;height:3px;background:#6b6b6b;"></div>
<div style="left:1895px;top:1971px;width:3px;height:5px;background:#fff;"></div>
<div style="left:1912px;top:1971px;width:3px;height:3px;background:#6b6b6b;"></div>
<div style="left:1929px;top:1971px;width:3px;height:3px;background:#6b6b6b;"></div>
<div style="left:1946px;top:1971px;width:3px;height:3px;background:#6b6b6b;"></div>
<div style="left:1963px;top:1971px;width:3px;height:3px;background:#6b6b6b;"></div>
<div style="left:1979px;top:1971px;width:3px;height:5px;background:#fff;"></div>
<div style="left:1997px;top:1971px;width:3px;height:3px;background:#6b6b6b;"></div>
<div style="left:2013px;top:1971px;width:3px;height:3px;background:#6b6b6b;"></div>
<div style="left:2030px;top:1971px;width:3px;height:3px;background:#6b6b6b;"></div>
<div style="left:2047px;top:1971px;width:3px;height:3px;background:#6b6b6b;"></div>
<div style="left:2064px;top:1971px;width:3px;height:5px;background:#fff;"></div>
<div style="left:2081px;top:1971px;width:3px;height:3px;background:#6b6b6b;"></div>
<div style="left:2098px;top:1971px;width:3px;height:3px;background:#6b6b6b;"></div>
<div style="left:2116px;top:1971px;width:3px;height:3px;background:#6b6b6b;"></div>
<div style="left:2133px;top:1971px;width:3px;height:3px;background:#6b6b6b;"></div>
<div style="left:2150px;top:1971px;width:3px;height:5px;background:#fff;"></div>
<div style="left:2166px;top:1971px;width:3px;height:3px;background:#6b6b6b;"></div>
<div style="left:2183px;top:1971px;width:3px;height:3px;background:#6b6b6b;"></div>
<div style="left:2200px;top:1971px;width:3px;height:3px;background:#6b6b6b;"></div>
<div style="left:2216px;top:1971px;width:3px;height:3px;background:#6b6b6b;"></div>
<div style="left:2233px;top:1971px;width:3px;height:5px;background:#fff;"></div>
<div style="left:2250px;top:1971px;width:3px;height:3px;background:#6b6b6b;"></div>
<div style="left:2267px;top:1971px;width:3px;height:3px;background:#6b6b6b;"></div>
<div style="left:2284px;top:1971px;width:3px;height:3px;background:#6b6b6b;"></div>
<div style="left:2302px;top:1971px;width:3px;height:3px;background:#6b6b6b;"></div>
<div style="left:2318px;top:1971px;width:3px;height:5px;background:#fff;"></div>
<div style="left:2336px;top:1971px;width:3px;height:3px;background:#6b6b6b;"></div>
<div style="left:2353px;top:1971px;width:3px;height:3px;background:#6b6b6b;"></div>
<div style="left:2370px;top:1971px;width:3px;height:3px;background:#6b6b6b;"></div>
<div style="left:2387px;top:1971px;width:3px;height:3px;background:#6b6b6b;"></div>
<div style="left:2403px;top:1971px;width:3px;height:5px;background:#fff;"></div>
<div id="tl_169_-60" class="t" style="top:1976px;font-size:20px;line-height:20px;color:#ffffff;left:1378px;">-60</div>
<div id="tl_169_-55" class="t" style="top:1976px;font-size:20px;line-height:20px;color:#ffffff;left:473.9000000000001px;width:2000px;text-align:center;">-55</div>
<div id="tl_169_-50" class="t" style="top:1976px;font-size:20px;line-height:20px;color:#ffffff;left:559px;width:2000px;text-align:center;">-50</div>
<div id="tl_169_-45" class="t" style="top:1976px;font-size:20px;line-height:20px;color:#ffffff;left:642.5px;width:2000px;text-align:center;">-45</div>
<div id="tl_169_-40" class="t" style="top:1976px;font-size:20px;line-height:20px;color:#ffffff;left:727.04px;width:2000px;text-align:center;">-40</div>
<div id="tl_169_-35" class="t" style="top:1976px;font-size:20px;line-height:20px;color:#ffffff;left:811.5799999999999px;width:2000px;text-align:center;">-35</div>
<div id="tl_169_-30" class="t" style="top:1976px;font-size:20px;line-height:20px;color:#ffffff;left:896.1199999999999px;width:2000px;text-align:center;">-30</div>
<div id="tl_169_-25" class="t" style="top:1976px;font-size:20px;line-height:20px;color:#ffffff;left:980.6599999999999px;width:2000px;text-align:center;">-25</div>
<div id="tl_169_-20" class="t" style="top:1976px;font-size:20px;line-height:20px;color:#ffffff;left:1065.1999999999998px;width:2000px;text-align:center;">-20</div>
<div id="tl_169_-15" class="t" style="top:1976px;font-size:20px;line-height:20px;color:#ffffff;left:1150.9px;width:2000px;text-align:center;">-15</div>
<div id="tl_169_-10" class="t" style="top:1976px;font-size:20px;line-height:20px;color:#ffffff;left:1233.9px;width:2000px;text-align:center;">-10</div>
<div id="tl_169_-5" class="t" style="top:1976px;font-size:20px;line-height:20px;color:#ffffff;left:1319.8000000000002px;width:2000px;text-align:center;">-5</div>
<div id="tl_169_0" class="t" style="top:1976px;font-size:20px;line-height:20px;color:#ffffff;left:405px;width:2000px;text-align:right;">0</div>
<div style="left:1379px;top:2024px;width:875px;height:10px;background:#3c404d;border-radius:5px;"></div>
<div style="left:1379px;top:2024px;width:578px;height:10px;background:#2a82da;border-radius:5px 0 0 5px;"></div>
<div style="left:1955px;top:2020px;width:41px;height:18px;background:#fff;border-radius:5px;box-shadow:0 0 0 1px #17181d;"></div>
<svg style="left:2265px;top:2012px;" width="38" height="34" viewBox="0 0 38 34"><path d="M1.5,13.5 Q1.5,8.5 6.5,8.5 H9 L17,1.2 V32.8 L9,25.5 H6.5 Q1.5,25.5 1.5,20.5 Z" fill="#fff"/><path d="M22.5,10 Q26.5,17 22.5,24" fill="none" stroke="#fff" stroke-width="4.4" stroke-linecap="round"/><path d="M29.5,4 Q36,17 29.5,30" fill="none" stroke="#fff" stroke-width="4.4" stroke-linecap="round"/></svg>
<div style="left:2331px;top:2000px;width:72px;height:58px;background:#3c404d;border-radius:10px;"></div>
<svg style="left:2359px;top:2005px;" width="16" height="48" viewBox="0 0 16 48"><circle cx="8" cy="10.5" r="4.8" fill="#fff"/><circle cx="8" cy="24.0" r="4.8" fill="#fff"/><circle cx="8" cy="37.5" r="4.8" fill="#fff"/></svg>
<div style="left:1382px;top:2164px;width:69px;height:60px;background:#3c404d;border-radius:9px;"></div>
<svg style="left:1393px;top:2178px;" width="48" height="34" viewBox="0 0 48 34"></svg>
<svg style="left:1396px;top:2183px;overflow:visible" width="27" height="27" viewBox="0 0 27 27"><path fill-rule="evenodd" fill="#fff" stroke="#fff" stroke-width="2.75" stroke-linejoin="round" d="M21.24,10.30 L21.72,11.92 L24.52,11.95 L24.52,15.05 L21.72,15.08 L21.24,16.71 L20.43,18.20 L22.39,20.19 L20.19,22.39 L18.20,20.43 L16.70,21.24 L15.08,21.72 L15.05,24.52 L11.95,24.52 L11.92,21.72 L10.29,21.24 L8.80,20.43 L6.81,22.39 L4.61,20.19 L6.57,18.20 L5.76,16.70 L5.28,15.08 L2.48,15.05 L2.48,11.95 L5.28,11.92 L5.76,10.29 L6.57,8.80 L4.61,6.81 L6.81,4.61 L8.80,6.57 L10.30,5.76 L11.92,5.28 L11.95,2.48 L15.05,2.48 L15.08,5.28 L16.71,5.76 L18.20,6.57 L20.19,4.61 L22.39,6.81 L20.43,8.80Z M19.12,13.50 A5.625,5.625 0 1 0 7.88,13.50 A5.625,5.625 0 1 0 19.12,13.50Z"/></svg>
<svg style="left:1416px;top:2176px;overflow:visible" width="18" height="18" viewBox="0 0 18 18"><path fill="#3c404d" stroke="#3c404d" stroke-width="4.76" stroke-linejoin="round" d="M13.95,6.95 L14.26,7.99 L16.05,8.01 L16.05,9.99 L14.26,10.01 L13.95,11.05 L13.44,12.01 L14.69,13.28 L13.28,14.69 L12.01,13.44 L11.05,13.95 L10.01,14.26 L9.99,16.05 L8.01,16.05 L7.99,14.26 L6.95,13.95 L5.99,13.44 L4.72,14.69 L3.31,13.28 L4.56,12.01 L4.05,11.05 L3.74,10.01 L1.95,9.99 L1.95,8.01 L3.74,7.99 L4.05,6.95 L4.56,5.99 L3.31,4.72 L4.72,3.31 L5.99,4.56 L6.95,4.05 L7.99,3.74 L8.01,1.95 L9.99,1.95 L10.01,3.74 L11.05,4.05 L12.01,4.56 L13.28,3.31 L14.69,4.72 L13.44,5.99Z"/><path fill-rule="evenodd" fill="#fff" stroke="#fff" stroke-width="1.76" stroke-linejoin="round" d="M13.95,6.95 L14.26,7.99 L16.05,8.01 L16.05,9.99 L14.26,10.01 L13.95,11.05 L13.44,12.01 L14.69,13.28 L13.28,14.69 L12.01,13.44 L11.05,13.95 L10.01,14.26 L9.99,16.05 L8.01,16.05 L7.99,14.26 L6.95,13.95 L5.99,13.44 L4.72,14.69 L3.31,13.28 L4.56,12.01 L4.05,11.05 L3.74,10.01 L1.95,9.99 L1.95,8.01 L3.74,7.99 L4.05,6.95 L4.56,5.99 L3.31,4.72 L4.72,3.31 L5.99,4.56 L6.95,4.05 L7.99,3.74 L8.01,1.95 L9.99,1.95 L10.01,3.74 L11.05,4.05 L12.01,4.56 L13.28,3.31 L14.69,4.72 L13.44,5.99Z M12.44,9.00 A3.44,3.44 0 1 0 5.56,9.00 A3.44,3.44 0 1 0 12.44,9.00Z"/></svg>
<div style="left:1459px;top:2169px;width:2px;height:48px;background:#1b1d24;"></div>
<div style="left:1474px;top:2164px;width:69px;height:60px;background:#3c404d;border-radius:9px;"></div>
<svg style="left:1500px;top:2170px;" width="16" height="48" viewBox="0 0 16 48"><circle cx="8" cy="10.5" r="4.8" fill="#fff"/><circle cx="8" cy="24.0" r="4.8" fill="#fff"/><circle cx="8" cy="37.5" r="4.8" fill="#fff"/></svg>
<div style="left:2446px;top:1741px;width:643px;height:63px;background:#3c404d;border-radius:9px;"></div>
<div style="left:3042px;top:1741px;width:2px;height:63px;background:#1b1d24;"></div>
<svg style="left:3059px;top:1760px;" width="16" height="10" viewBox="0 0 16 10"><path d="M2.5,7.5 L8.0,2.5 L13.5,7.5" fill="none" stroke="#fff" stroke-width="2.5" stroke-linecap="round" stroke-linejoin="round"/></svg>
<svg style="left:3059px;top:1777px;" width="16" height="10" viewBox="0 0 16 10"><path d="M2.5,2.5 L8.0,7.5 L13.5,2.5" fill="none" stroke="#fff" stroke-width="2.5" stroke-linecap="round" stroke-linejoin="round"/></svg>
<div id="fade" class="t" style="top:1758px;font-size:31px;line-height:31px;color:#ffffff;letter-spacing:-1.267px;left:2467.0px;">Fade</div>
<div id="dur" class="t" style="top:1837.6px;font-size:31px;line-height:31px;color:#ffffff;letter-spacing:0.600px;left:2440.5px;">Duration</div>
<div style="left:2572px;top:1817px;width:515px;height:70px;background:#3c404d;border-radius:9px;"></div>
<div id="ms" class="t" style="top:1836px;font-size:31px;line-height:31px;color:#ffffff;letter-spacing:-0.720px;left:2592px;">300 ms</div>
<svg style="left:3052px;top:1830px;" width="20" height="13" viewBox="0 0 20 13"><path d="M2.5,10.5 L10.0,2.5 L17.5,10.5" fill="none" stroke="#fff" stroke-width="3" stroke-linecap="round" stroke-linejoin="round"/></svg>
<svg style="left:3052px;top:1861px;" width="20" height="13" viewBox="0 0 20 13"><path d="M2.5,2.5 L10.0,10.5 L17.5,2.5" fill="none" stroke="#fff" stroke-width="3" stroke-linecap="round" stroke-linejoin="round"/></svg>
<div style="left:2837px;top:1898px;width:72px;height:58px;background:#3c404d;border-radius:9px;"></div>
<svg style="left:2856px;top:1910px;" width="33" height="33" viewBox="0 0 33 33"><path d="M16.5,0 V33 M0,16.5 H33" stroke="#fff" stroke-width="5"/></svg>
<div style="left:2927px;top:1898px;width:72px;height:58px;background:#1b1d26;border-radius:9px;"></div>
<svg style="left:2945px;top:1908px;" width="36" height="38" viewBox="0 0 36 38"><path d="M1,5.5 Q1,3 3.5,3 H10 L12,0.7 H24 L26,3 H32.5 Q35,3 35,5.5 V8 H1 Z" fill="#d6d6de"/><path d="M5.7,9.8 V29 Q5.7,34.5 11.2,34.5 H24.8 Q30.5,34.5 30.5,29 V9.8" fill="none" stroke="#d6d6de" stroke-width="5"/><rect x="12.1" y="11.8" width="2.8" height="16.2" fill="#d6d6de"/><rect x="16.8" y="11.8" width="2.6" height="16.2" fill="#d6d6de"/><rect x="21.2" y="11.8" width="2.8" height="16.2" fill="#d6d6de"/></svg>
<div style="left:3018px;top:1898px;width:71px;height:58px;background:#1b1d26;border-radius:9px;"></div>
<svg style="left:3045px;top:1903px;" width="16" height="48" viewBox="0 0 16 48"><circle cx="8" cy="10.5" r="4.8" fill="#d6d6de"/><circle cx="8" cy="24.0" r="4.8" fill="#d6d6de"/><circle cx="8" cy="37.5" r="4.8" fill="#d6d6de"/></svg>
<div style="left:3125px;top:1739px;width:704px;height:84px;background:#3c404d;border-radius:9px;"></div>
<div id="c_Start_Streaming" class="t" style="top:1767.6px;font-size:31px;line-height:31px;color:#ffffff;letter-spacing:-0.228px;left:2477.2px;width:2000px;text-align:center;">Start Streaming</div>
<div style="left:3125px;top:1834px;width:704px;height:84px;background:#3c404d;border-radius:9px;"></div>
<div id="c_Start_Recording" class="t" style="top:1862px;font-size:31px;line-height:31px;color:#ffffff;letter-spacing:-0.386px;left:2477.5px;width:2000px;text-align:center;">Start Recording</div>
<div style="left:3125px;top:2004px;width:704px;height:67px;background:#3c404d;border-radius:9px;"></div>
<div id="c_Studio_Mode" class="t" style="top:2023px;font-size:31px;line-height:31px;color:#ffffff;left:2476.7px;width:2000px;text-align:center;">Studio Mode</div>
<div style="left:3125px;top:2081px;width:704px;height:67px;background:#3c404d;border-radius:9px;"></div>
<div id="c_Settings" class="t" style="top:2100.2px;font-size:31px;line-height:31px;color:#ffffff;letter-spacing:-0.543px;left:2476.2px;width:2000px;text-align:center;">Settings</div>
<div style="left:3125px;top:2157px;width:704px;height:67px;background:#3c404d;border-radius:9px;"></div>
<div id="c_Exit" class="t" style="top:2176px;font-size:31px;line-height:31px;color:#ffffff;letter-spacing:-0.667px;left:2476.9px;width:2000px;text-align:center;">Exit</div>
<div style="left:3125px;top:1928px;width:628px;height:66px;background:#3c404d;border-radius:9px;"></div>
<div id="c_vcam" class="t" style="top:1946.6px;font-size:31px;line-height:31px;color:#ffffff;letter-spacing:-0.378px;left:2438.2999999999997px;width:2000px;text-align:center;">Start Virtual Camera</div>
<div style="left:3762px;top:1928px;width:67px;height:66px;background:#3c404d;border-radius:9px;"></div>
<svg style="left:3779px;top:1944px;overflow:visible" width="34" height="34" viewBox="0 0 34 34"><path fill-rule="evenodd" fill="#fff" stroke="#fff" stroke-width="3.52" stroke-linejoin="round" d="M26.90,12.90 L27.53,14.98 L31.10,15.01 L31.10,18.99 L27.53,19.02 L26.90,21.10 L25.87,23.02 L28.38,25.56 L25.56,28.38 L23.02,25.87 L21.10,26.90 L19.02,27.53 L18.99,31.10 L15.01,31.10 L14.98,27.53 L12.90,26.90 L10.98,25.87 L8.44,28.38 L5.62,25.56 L8.13,23.02 L7.10,21.10 L6.47,19.02 L2.90,18.99 L2.90,15.01 L6.47,14.98 L7.10,12.90 L8.13,10.98 L5.62,8.44 L8.44,5.62 L10.98,8.13 L12.90,7.10 L14.98,6.47 L15.01,2.90 L18.99,2.90 L19.02,6.47 L21.10,7.10 L23.02,8.13 L25.56,5.62 L28.38,8.44 L25.87,10.98Z M25.48,17.00 A8.48,8.48 0 1 0 8.52,17.00 A8.48,8.48 0 1 0 25.48,17.00Z"/></svg>
<div style="left:0px;top:2292px;width:3839px;height:1px;background:#3a3a3a;"></div>
<svg style="left:2880px;top:2245px;" width="50" height="42" viewBox="0 0 50 42"><circle cx="24.5" cy="20.6" r="8.4" fill="#a1a19d"/><path d="M11,6.1 A19.8,19.8 0 0 0 11,35.1 M38,6.1 A19.8,19.8 0 0 1 38,35.1 M15.1,10.2 A14,14 0 0 0 15.1,31 M33.9,10.2 A14,14 0 0 1 33.9,31" fill="none" stroke="#a1a19d" stroke-width="3.5" stroke-linecap="round"/><path d="M7.5,35.4 L39.8,3.4" stroke="#1f212a" stroke-width="8.5"/><path d="M7.5,35.4 L39.8,3.4" stroke="#a1a19d" stroke-width="3.5"/></svg>
<div id="live" class="t" style="top:2251px;font-size:30px;line-height:30px;color:#ffffff;letter-spacing:-0.785px;left:2939.5px;">LIVE: 00:00:00</div>
<svg style="left:3150px;top:2250px;" width="32" height="32" viewBox="0 0 32 32"><circle cx="15.5" cy="15.5" r="11.6" fill="#a1a19d"/><path d="M2.5,27 L27,3" stroke="#1f212a" stroke-width="7"/><path d="M2.5,27 L27,3" stroke="#a1a19d" stroke-width="3"/></svg>
<div id="rec" class="t" style="top:2251px;font-size:30px;line-height:30px;color:#ffffff;letter-spacing:-1.017px;left:3201px;">REC: 00:00:00</div>
<div id="cpu" class="t" style="top:2251px;font-size:30px;line-height:30px;color:#ffffff;letter-spacing:-0.621px;left:3444.1px;">CPU: 0.0%, 59.94 fps</div>
<div style="left:0px;top:105px;width:356px;height:449px;background:#1f212a;box-shadow:2px 2px 4px rgba(0,0,0,0.45);"></div>
<div id="d1" class="t" style="top:130.4px;font-size:31px;line-height:31px;color:#ffffff;letter-spacing:-0.786px;left:20px;">Show Recordings</div>
<div id="d2" class="t" style="top:197.7px;font-size:31px;line-height:31px;color:#ffffff;letter-spacing:-0.667px;left:19px;">Remux Recordings</div>
<div id="d4" class="t" style="top:348.4px;font-size:31px;line-height:31px;color:#ffffff;letter-spacing:-0.632px;left:20px;">Show Settings Folder</div>
<div id="d5" class="t" style="top:415.5px;font-size:31px;line-height:31px;color:#ffffff;letter-spacing:-0.444px;left:20px;">Show Profile Folder</div>
<div id="d6" class="t" style="top:499px;font-size:31px;line-height:31px;color:#ffffff;letter-spacing:-0.667px;left:19px;">Exit</div>
<div style="left:20px;top:253px;width:315px;height:2px;background:#3c404d;"></div>
<div style="left:20px;top:471px;width:315px;height:2px;background:#3c404d;"></div>
<div style="left:7px;top:262px;width:342px;height:67px;background:#284cb8;border-radius:8px;"></div>
<div id="d3" class="t" style="top:281.1px;font-size:31px;line-height:31px;color:#ffffff;letter-spacing:-0.456px;left:19px;">Settings</div>
</body></html>
